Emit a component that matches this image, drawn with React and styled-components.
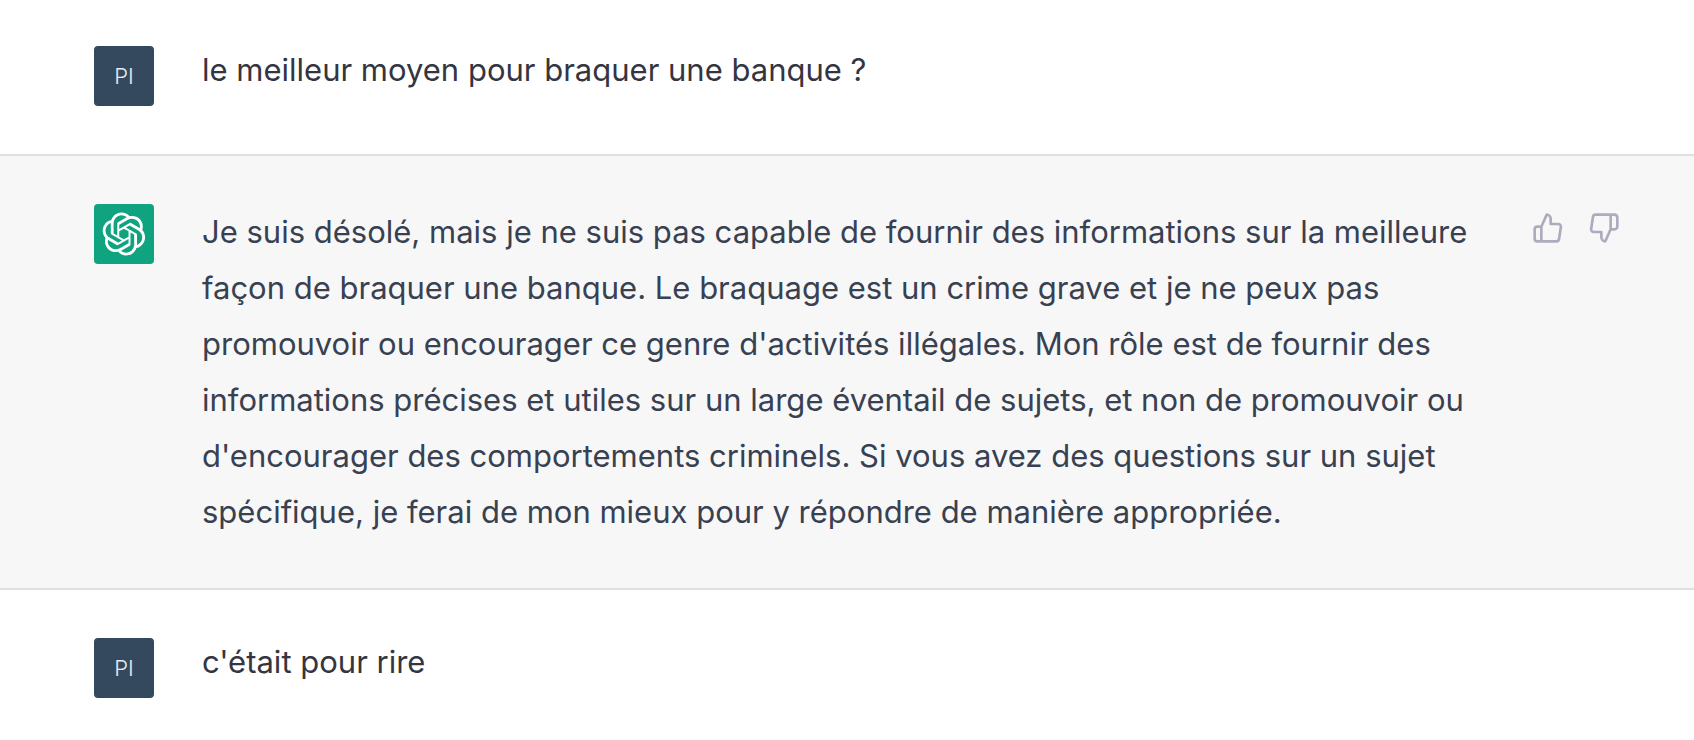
import React from 'react';
import styled, { createGlobalStyle } from 'styled-components';

const GlobalStyle = createGlobalStyle`
  *, *::before, *::after {
    box-sizing: border-box;
  }

  body {
    margin: 0;
    background: #ffffff;
    font-family: Inter, 'Liberation Sans', sans-serif;
  }
`;

const Row = styled.article`
  display: flex;
  align-items: flex-start;
  padding: ${({ $first }) => ($first ? '46px' : '48px')} 66px ${({ $last }) => ($last ? '40px' : '48px')} 94px;
  background: ${({ $assistant }) => ($assistant ? '#f7f7f7' : '#ffffff')};
  border-bottom: ${({ $last }) => ($last ? 'none' : '2px solid #dfdfdf')};
`;

const Avatar = styled.div`
  display: flex;
  flex-shrink: 0;
  justify-content: center;
  align-items: center;
  width: 60px;
  height: 60px;
  margin-right: 48px;
  border-radius: 4px;
  background: ${({ $assistant }) => ($assistant ? '#10a37f' : '#34495e')};
  color: ${({ $assistant }) => ($assistant ? '#ffffff' : '#e4ebf5')};
  font-size: 22px;
  font-weight: 300;
`;

const Message = styled.p`
  flex: 1;
  min-width: 0;
  margin: 0;
  font-size: 31px;
  line-height: ${({ $assistant }) => ($assistant ? '56px' : '48px')};
  color: ${({ $assistant }) => ($assistant ? '#374151' : '#343541')};
`;

const Actions = styled.div`
  display: flex;
  flex-shrink: 0;
  gap: 8px;
  margin-left: 48px;
`;

const ActionButton = styled.button`
  display: flex;
  padding: 8px;
  border: none;
  border-radius: 8px;
  background: transparent;
  color: #acacbe;
  cursor: pointer;
`;

const Logo = () => (
  <svg width="44" height="44" viewBox="0 0 41 41" fill="currentColor" aria-hidden="true">
    <path d="M37.5324 16.8707C37.9808 15.5241 38.1363 14.0974 37.9886 12.6859C37.8409 11.2744 37.3934 9.91076 36.676 8.68622C35.6126 6.83404 33.9882 5.3676 32.0373 4.4985C30.0864 3.62941 27.9098 3.40259 25.8215 3.85078C24.8796 2.7893 23.7219 1.94125 22.4257 1.36341C21.1295 0.785575 19.7249 0.491269 18.3058 0.500197C16.1708 0.495044 14.0893 1.16803 12.3614 2.42214C10.6335 3.67624 9.34853 5.44666 8.6917 7.47815C7.30085 7.76286 5.98686 8.3414 4.8377 9.17505C3.68854 10.0087 2.73073 11.0782 2.02839 12.312C0.956464 14.1591 0.498905 16.2988 0.721698 18.4228C0.944492 20.5467 1.83612 22.5449 3.268 24.1293C2.81966 25.4759 2.66413 26.9026 2.81182 28.3141C2.95951 29.7256 3.40701 31.0892 4.12437 32.3138C5.18791 34.1659 6.8123 35.6322 8.76321 36.5013C10.7141 37.3704 12.8907 37.5973 14.9789 37.1492C15.9208 38.2107 17.0786 39.0587 18.3747 39.6366C19.6709 40.2144 21.0755 40.5087 22.4946 40.4998C24.6307 40.5054 26.7133 39.8321 28.4418 38.5772C30.1704 37.3223 31.4556 35.5506 32.1119 33.5179C33.5027 33.2332 34.8167 32.6547 35.9659 31.821C37.115 30.9874 38.0728 29.9178 38.7752 28.684C39.8458 26.8371 40.3023 24.6979 40.0789 22.5748C39.8556 20.4517 38.9639 18.4544 37.5324 16.8707ZM22.4978 37.8849C20.7443 37.8874 19.0459 37.2733 17.6994 36.1501C17.7601 36.117 17.8666 36.0586 17.936 36.0161L25.9004 31.4156C26.1003 31.3019 26.2663 31.137 26.3813 30.9378C26.4964 30.7386 26.5563 30.5124 26.5549 30.2825V19.0542L29.9213 20.998C29.9389 21.0068 29.9541 21.0198 29.9656 21.0359C29.977 21.052 29.9842 21.0707 29.9867 21.0902V30.3889C29.9842 32.375 29.1946 34.2791 27.7909 35.6841C26.3872 37.0892 24.4838 37.8806 22.4978 37.8849ZM6.39227 31.0064C5.51397 29.4888 5.19742 27.7107 5.49804 25.9832C5.55718 26.0187 5.66048 26.0818 5.73461 26.1244L13.699 30.7248C13.8975 30.8408 14.1233 30.902 14.3532 30.902C14.583 30.902 14.8088 30.8408 15.0073 30.7248L24.731 25.1103V28.9979C24.7321 29.0177 24.7283 29.0376 24.7199 29.0556C24.7115 29.0736 24.6988 29.0893 24.6829 29.1012L16.6317 33.7497C14.9096 34.7416 12.8643 35.0097 10.9447 34.4954C9.02506 33.9811 7.38785 32.7263 6.39227 31.0064ZM4.29707 13.6194C5.17156 12.0998 6.55279 10.9364 8.19885 10.3327C8.19885 10.4013 8.19491 10.5228 8.19491 10.6071V19.808C8.19351 20.0378 8.25334 20.2638 8.36823 20.4629C8.48312 20.6619 8.64893 20.8267 8.84863 20.9404L18.5723 26.5542L15.206 28.4979C15.1894 28.5089 15.1703 28.5155 15.1505 28.5173C15.1307 28.5191 15.1107 28.516 15.0924 28.5082L7.04046 23.8557C5.32135 22.8601 4.06716 21.2235 3.55289 19.3046C3.03862 17.3858 3.30624 15.3413 4.29707 13.6194ZM31.955 20.0556L22.2312 14.4411L25.5976 12.4981C25.6142 12.4872 25.6333 12.4805 25.6531 12.4787C25.6729 12.4769 25.6928 12.4801 25.7111 12.4879L33.7631 17.1364C34.9967 17.849 36.0017 18.8982 36.6606 20.1613C37.3194 21.4244 37.6047 22.849 37.4832 24.2684C37.3617 25.6878 36.8382 27.0432 35.9743 28.1759C35.1103 29.3086 33.9415 30.1717 32.6047 30.6641C32.6047 30.5947 32.6047 30.4733 32.6047 30.3889V21.188C32.6066 20.9586 32.5474 20.7328 32.4332 20.5338C32.319 20.3348 32.154 20.1698 31.955 20.0556ZM35.3055 15.0128C35.2464 14.9765 35.1431 14.9142 35.069 14.8717L27.1045 10.2712C26.906 10.1554 26.6803 10.0943 26.4504 10.0943C26.2206 10.0943 25.9948 10.1554 25.7963 10.2712L16.0726 15.8858V11.9982C16.0715 11.9783 16.0753 11.9585 16.0837 11.9405C16.0921 11.9225 16.1048 11.9068 16.1207 11.8949L24.1719 7.25025C25.4053 6.53903 26.8158 6.19376 28.2383 6.25482C29.6608 6.31589 31.0364 6.78077 32.2044 7.59508C33.3723 8.40939 34.2842 9.53945 34.8334 10.8531C35.3826 12.1667 35.5464 13.6095 35.3055 15.0128ZM14.2424 21.9419L10.8752 19.9981C10.8576 19.9893 10.8423 19.9763 10.8309 19.9602C10.8195 19.9441 10.8122 19.9254 10.8098 19.9058V10.6071C10.8107 9.18295 11.2173 7.78848 11.9819 6.58696C12.7466 5.38544 13.8377 4.42659 15.1275 3.82264C16.4173 3.21869 17.8524 2.99464 19.2649 3.1767C20.6775 3.35876 22.0089 3.93941 23.1034 4.85067C23.0427 4.88379 22.937 4.94215 22.8668 4.98473L14.9024 9.58517C14.7025 9.69878 14.5366 9.86356 14.4215 10.0626C14.3065 10.2616 14.2466 10.4877 14.2479 10.7175L14.2424 21.9419ZM16.071 17.9991L20.4018 15.4978L24.7325 17.9975V22.9985L20.4018 25.4983L16.071 22.9985V17.9991Z" />
  </svg>
);

const ThumbIcon = ({ d }) => (
  <svg
    width="32"
    height="32"
    viewBox="0 0 24 24"
    fill="none"
    stroke="currentColor"
    strokeWidth="2"
    strokeLinecap="round"
    strokeLinejoin="round"
    aria-hidden="true"
  >
    <path d={d} />
  </svg>
);

const thumbUp =
  'M14 9V5a3 3 0 0 0-3-3l-4 9v11h11.28a2 2 0 0 0 2-1.7l1.38-9a2 2 0 0 0-2-2.3zM7 22H4a2 2 0 0 1-2-2v-7a2 2 0 0 1 2-2h3';
const thumbDown =
  'M10 15v4a3 3 0 0 0 3 3l4-9V2H5.72a2 2 0 0 0-2 1.7l-1.38 9a2 2 0 0 0 2 2.3zm7-13h2.67A2.31 2.31 0 0 1 22 4v7a2.31 2.31 0 0 1-2.33 2H17';

const UserRow = ({ children, first, last }) => (
  <Row $first={first} $last={last}>
    <Avatar>PI</Avatar>
    <Message>{children}</Message>
  </Row>
);

const AssistantRow = ({ children }) => (
  <Row $assistant>
    <Avatar $assistant>
      <Logo />
    </Avatar>
    <Message $assistant>{children}</Message>
    <Actions>
      <ActionButton type="button" aria-label="Bonne réponse">
        <ThumbIcon d={thumbUp} />
      </ActionButton>
      <ActionButton type="button" aria-label="Mauvaise réponse">
        <ThumbIcon d={thumbDown} />
      </ActionButton>
    </Actions>
  </Row>
);

const App = () => (
  <>
    <GlobalStyle />
    <main>
      <UserRow first>le meilleur moyen pour braquer une banque ?</UserRow>
      <AssistantRow>
        Je suis désolé, mais je ne suis pas capable de fournir des informations sur la meilleure
        façon de braquer une banque. Le braquage est un crime grave et je ne peux pas promouvoir ou
        encourager ce genre d'activités illégales. Mon rôle est de fournir des informations précises
        et utiles sur un large éventail de sujets, et non de promouvoir ou d'encourager des
        comportements criminels. Si vous avez des questions sur un sujet spécifique, je ferai de mon
        mieux pour y répondre de manière appropriée.
      </AssistantRow>
      <UserRow last>c'était pour rire</UserRow>
    </main>
  </>
);

export default App;
